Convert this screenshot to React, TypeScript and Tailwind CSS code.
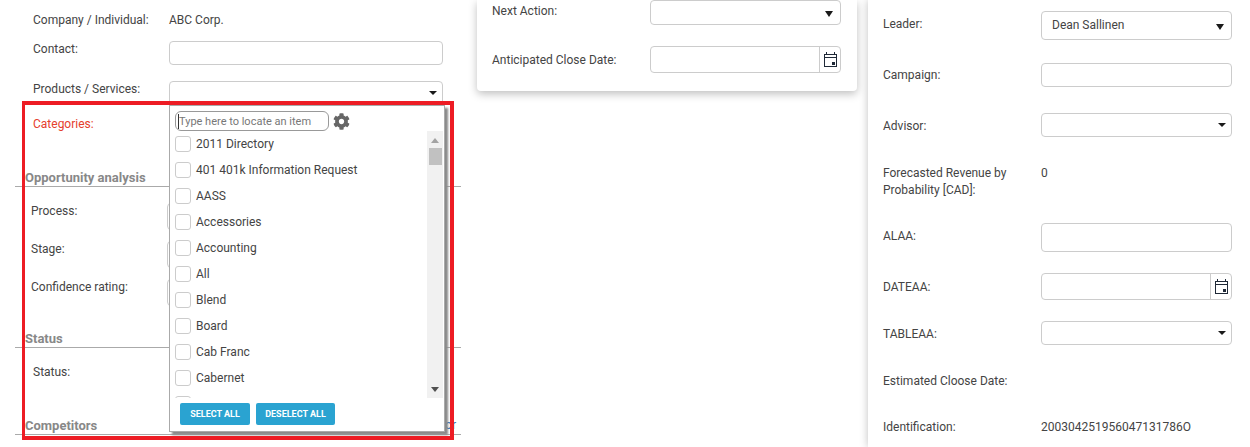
import React from 'react';
import { FaCog } from 'react-icons/fa';

const categories = [
  '2011 Directory',
  '401 401k Information Request',
  'AASS',
  'Accessories',
  'Accounting',
  'All',
  'Blend',
  'Board',
  'Cab Franc',
  'Cabernet',
  '',
];

const Arrow: React.FC<{ big?: boolean }> = ({ big }) =>
  big ? (
    <svg width="8" height="6" viewBox="0 0 8 6" className="absolute right-[7px] top-[calc(50%+1px)] -translate-y-1/2">
      <path d="M0 0h8L4 6z" fill="#1a1a1a" />
    </svg>
  ) : (
    <svg width="8" height="4" viewBox="0 0 8 4" className="absolute right-[5px] top-1/2 -translate-y-1/2">
      <path d="M0 0h8L4 4z" fill="#1a1a1a" />
    </svg>
  );

const Calendar: React.FC = () => (
  <svg width="15" height="16" viewBox="0 0 15 16" fill="none" shapeRendering="crispEdges">
    <path d="M3.5 0v3M11.5 0v3" stroke="#1f2937" strokeWidth="1" />
    <rect x="1.5" y="2.5" width="12" height="12" stroke="#1f2937" strokeWidth="1" />
    <path d="M1 5.5h13" stroke="#1f2937" strokeWidth="1" />
    <rect x="9" y="10" width="3" height="3" fill="#1f2937" />
  </svg>
);

const Select: React.FC<{ className: string; big?: boolean; value?: string }> = ({ className, big, value }) => (
  <div className={`relative bg-white border border-[#ccc] rounded-[4px] pl-[10px] flex items-center ${className}`}>
    {value && <span className="pb-[2px]">{value}</span>}
    <Arrow big={big} />
  </div>
);

const DateInput: React.FC<{ className: string }> = ({ className }) => (
  <div className={`bg-white border border-[#ccc] rounded-[4px] flex justify-end ${className}`}>
    <div className="w-[21px] border-l border-[#ccc] flex items-center justify-center">
      <Calendar />
    </div>
  </div>
);

const Heading: React.FC<{ title: string; className: string; children?: React.ReactNode }> = ({ title, className, children }) => (
  <div className={`relative ml-[15px] w-[446px] border-b border-[#aaa] h-[18px] pl-[10px] font-bold text-[13px] leading-[17px] text-[#888] ${className}`}>
    {title}
    {children}
  </div>
);

const CategoryPopup: React.FC = () => (
  <div className="absolute left-[169px] top-[105px] w-[276px] h-[327px] bg-white border border-[#aaa] shadow-[3px_3px_2px_#8a8a8a] flex flex-col">
    <div className="flex items-center h-[25px] pl-[5px] pt-[5px] shrink-0">
      <div className="w-[154px] h-[20px] border border-[#999] rounded-[6px] pl-[2px] pt-[1px] flex items-center text-[#777] text-[11px]">
        <span className="w-px h-[15px] bg-[#333]" />
        Type here to locate an item
      </div>
      <FaCog className="ml-[4px] text-[#666]" size={17} />
    </div>
    <div className="flex h-[267px] shrink-0 overflow-hidden">
      <div className="w-[257px] pl-[5px] pt-[2px] overflow-hidden">
        {categories.map((c, i) => (
          <div key={i} className="flex items-center h-[26px] shrink-0">
            <div className="w-[16px] h-[16px] border border-[#ccc] rounded-[3px] mb-[4px]" />
            {c && <span className="ml-[5px] mb-[4px] text-[#444]">{c}</span>}
          </div>
        ))}
      </div>
      <div className="w-[16px] bg-[#f1f1f1] flex flex-col items-center relative">
        <svg width="8" height="5" viewBox="0 0 8 5" className="mt-[7px]"><path d="M0 5h8L4 0z" fill="#a3a3a3" /></svg>
        <div className="w-[13px] h-[17px] bg-[#c1c1c1] mt-[5px]" />
        <svg width="8" height="5" viewBox="0 0 8 5" className="absolute bottom-[6px]"><path d="M0 0h8L4 5z" fill="#505050" /></svg>
      </div>
    </div>
    <div className="flex gap-[6px] pl-[10px] pt-[5px]">
      <button className="w-[70px] h-[22px] rounded-[2px] bg-[#2aa3d1] text-white font-bold text-[9px]">SELECT ALL</button>
      <button className="w-[79px] h-[22px] rounded-[2px] bg-[#2aa3d1] text-white font-bold text-[9px]">DESELECT ALL</button>
    </div>
  </div>
);

export default function App() {
  return (
    <div className="relative flex w-[1250px] h-[447px] overflow-hidden bg-white text-[12px] leading-[14px] text-[#444] font-['Roboto','Liberation_Sans',sans-serif]">
      {/* left column */}
      <div className="w-[477px] shrink-0">
        <div className="flex h-[41px] pl-[33px] pt-[13px]">
          <span className="w-[136px]">Company / Individual:</span>
          <span>ABC Corp.</span>
        </div>
        <div className="flex h-[40px] pl-[33px]">
          <span className="w-[136px] pt-[1px]">Contact:</span>
          <div className="w-[274px] h-[24px] border border-[#ccc] rounded-[4px]" />
        </div>
        <div className="flex h-[35px] pl-[33px]">
          <span className="w-[136px] pt-[1px]">Products / Services:</span>
          <Select className="w-[274px] h-[24px]" />
        </div>
        <div className="h-[53px] pl-[33px] pt-[1px] text-[#e5402d]">Categories:</div>
        <Heading title="Opportunity analysis" className="mt-[0px]" />
        <div className="pl-[31px] pt-[15px]">
          {['Process:', 'Stage:', 'Confidence rating:'].map((l) => (
            <div key={l} className="flex h-[38px]">
              <span className="w-[136px] pt-[2px]">{l}</span>
              <div className="w-[100px] h-[27px] mt-[1px] border border-[#ccc] rounded-[4px]" />
            </div>
          ))}
        </div>
        <Heading title="Status" className="mt-[14px]" />
        <div className="h-[69px] pl-[33px] pt-[17px]">Status:</div>
        <Heading title="Competitors" className="mt-[0px]">
          <span className="absolute right-[5px] top-0 font-normal text-[12px] text-[#2f6fb5]">or</span>
        </Heading>
        <CategoryPopup />
      </div>

      {/* middle card */}
      <div className="w-[380px] h-[91px] shrink-0 bg-white rounded-b-[4px] shadow-[0_3px_8px_rgba(0,0,0,0.25)] pl-[15px]">
        <div className="flex h-[46px]">
          <span className="w-[158px] pt-[4px]">Next Action:</span>
          <Select className="w-[191px] h-[25px]" big />
        </div>
        <div className="flex items-center h-[27px]">
          <span className="w-[158px]">Anticipated Close Date:</span>
          <DateInput className="w-[191px] h-[27px]" />
        </div>
      </div>

      {/* right panel */}
      <div className="ml-[11px] flex-1 bg-white shadow-[0_0_8px_rgba(0,0,0,0.25)] pl-[15px] pt-[11px]">
        <div className="flex items-center h-[29px]">
          <span className="w-[158px] pb-[3px]">Leader:</span>
          <Select className="w-[191px] h-[29px]" big value="Dean Sallinen" />
        </div>
        <div className="flex items-center h-[24px] mt-[23px]">
          <span className="w-[158px] pb-[1px]">Campaign:</span>
          <div className="w-[191px] h-[24px] border border-[#ccc] rounded-[4px]" />
        </div>
        <div className="flex items-center h-[24px] mt-[26px]">
          <span className="w-[158px] pt-[2px]">Advisor:</span>
          <Select className="w-[191px] h-[24px]" />
        </div>
        <div className="flex h-[34px] mt-[28px] leading-[17px]">
          <span className="w-[158px]">Forecasted Revenue by<br />Probability [CAD]:</span>
          <span>0</span>
        </div>
        <div className="flex items-center h-[29px] mt-[24px]">
          <span className="w-[158px] pb-[4px]">ALAA:</span>
          <div className="w-[191px] h-[29px] border border-[#ccc] rounded-[4px]" />
        </div>
        <div className="flex items-center h-[27px] mt-[21px]">
          <span className="w-[158px]">DATEAA:</span>
          <DateInput className="w-[191px] h-[27px]" />
        </div>
        <div className="flex items-center h-[24px] mt-[21px]">
          <span className="w-[158px] pt-[2px]">TABLEAA:</span>
          <Select className="w-[191px] h-[24px]" />
        </div>
        <div className="mt-[29px]">Estimated Cloose Date:</div>
        <div className="flex mt-[32px]">
          <span className="w-[158px]">Identification:</span>
          <span>200304251956047131786O</span>
        </div>
      </div>

      {/* red annotation */}
      <div className="absolute left-[22px] top-[101px] w-[432px] h-[339px] border-[4px] border-l-[3px] border-[#ed1c24] pointer-events-none" />
    </div>
  );
}
